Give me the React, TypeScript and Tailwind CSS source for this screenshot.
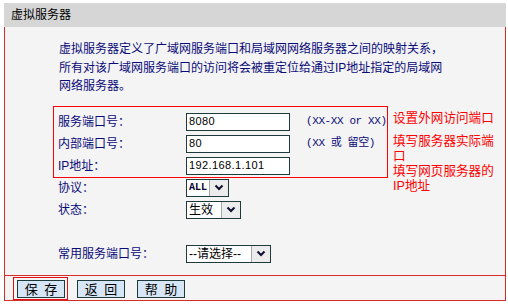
function Chevron() {
  return (
    <svg width="10" height="7" viewBox="0 0 10 7" className="block">
      <path d="M1.5 1.5 L5 5 L8.5 1.5" fill="none" stroke="#101030" strokeWidth="2" />
    </svg>
  );
}

function Select({ w, children }: { w: string; children: React.ReactNode }) {
  return (
    <div className={`${w} h-[18px] bg-white border border-[#1e3a3a] flex items-stretch`}>
      <div className="flex-1 flex items-center pl-[2px] overflow-hidden whitespace-nowrap">{children}</div>
      <div className="w-[19px] bg-[#ececec] border-l border-[#a8a8a8] flex items-center justify-center">
        <Chevron />
      </div>
    </div>
  );
}

function TextBox({ value }: { value: string }) {
  return (
    <div className="w-[104px] h-[18px] shrink-0 bg-white border border-[#1e3a3a] flex items-center pl-[2px] text-[11px] text-black [font-family:'Liberation_Sans',sans-serif] tracking-[0.4px]">
      {value}
    </div>
  );
}

function Btn({ label }: { label: string }) {
  return (
    <div className="w-[48px] h-[18px] bg-[#d6e6f6] border border-[#1e3a3a] flex items-center justify-center text-[13px] text-black leading-none [word-spacing:3px]">
      {label}
    </div>
  );
}

export default function App() {
  const rows = [
    { label: "服务端口号：", value: "8080", hint: "(XX-XX or XX)" },
    { label: "内部端口号：", value: "80", hint: "(XX 或 留空)" },
    { label: "IP地址：", value: "192.168.1.101", hint: "" },
  ];
  return (
    <div className="w-[508px] h-[304px] bg-white pt-[3px] pl-[4px] [font-family:'Liberation_Sans','Noto_Sans_CJK_SC',sans-serif]">
      <div className="w-[502px] h-[24px] bg-[#d6d6d6] flex items-center pl-[7px] text-[12px] text-black leading-none">
        虚拟服务器
      </div>
      <div className="w-[502px] h-[274px] bg-[#f4f4f4] border-x border-b border-[#d42b2b] flex flex-col">
        <div className="flex-1 flex flex-col">
          <p className="pl-[54px] pt-[13px] text-[12px] leading-[18.5px] text-[#0a0a78]">
            虚拟服务器定义了广域网服务端口和局域网网络服务器之间的映射关系，
            <br />
            所有对该广域网服务端口的访问将会被重定位给通过IP地址指定的局域网
            <br />
            网络服务器。
          </p>
          <div className="mt-[10px] ml-[48px] flex">
            <div className="w-[335px] h-[72px] shrink-0 border border-[#ff0000] pt-[6px] pl-[4px] flex flex-col gap-[4px]">
              {rows.map((r) => (
                <div key={r.label} className="flex items-center h-[18px] whitespace-nowrap">
                  <span className="w-[128px] shrink-0 text-[12px] text-[#0a0a78] leading-none">{r.label}</span>
                  <TextBox value={r.value} />
                  {r.hint && (
                    <span className="ml-[16px] whitespace-nowrap text-[11px] text-[#0a0a78] leading-none tracking-[-0.4px] [font-family:'Liberation_Mono','Noto_Sans_CJK_SC',monospace]">
                      {r.hint}
                    </span>
                  )}
                </div>
              ))}
            </div>
            <div className="ml-[5px] w-[110px] h-[72px] pt-[5px] text-[#ff0000] text-[12.6px] leading-[15px]">
              <div>设置外网访问端口</div>
              <div className="mt-[8px]">填写服务器实际端口</div>
              <div>填写网页服务器的IP地址</div>
            </div>
          </div>
          <div className="ml-[53px] mt-[1px] flex flex-col text-[12px] text-[#0a0a78]">
            <div className="flex items-center h-[18px]">
              <span className="w-[128px] leading-none">协议：</span>
              <Select w="w-[43px]">
                <span className="text-[10px] font-bold text-[#000033] [font-family:'Liberation_Mono',monospace]">ALL</span>
              </Select>
            </div>
            <div className="flex items-center h-[18px] mt-[4px]">
              <span className="w-[128px] leading-none">状态：</span>
              <Select w="w-[55px]">
                <span className="text-[12px] text-black leading-none">生效</span>
              </Select>
            </div>
            <div className="flex items-center h-[18px] mt-[26px]">
              <span className="w-[128px] leading-none">常用服务端口号：</span>
              <Select w="w-[85px]">
                <span className="text-[12px] text-black leading-none">--请选择--</span>
              </Select>
            </div>
          </div>
        </div>
        <div className="h-[25px] border-t border-[#d42b2b] flex items-start pl-[8px] pt-[1px]">
          <div className="border border-[#e01010] pt-[2px] pb-[1px] pl-[3px] pr-[2px]">
            <Btn label="保 存" />
          </div>
          <div className="ml-[9px] mt-[3px]">
            <Btn label="返 回" />
          </div>
          <div className="ml-[12px] mt-[3px]">
            <Btn label="帮 助" />
          </div>
        </div>
      </div>
    </div>
  );
}
